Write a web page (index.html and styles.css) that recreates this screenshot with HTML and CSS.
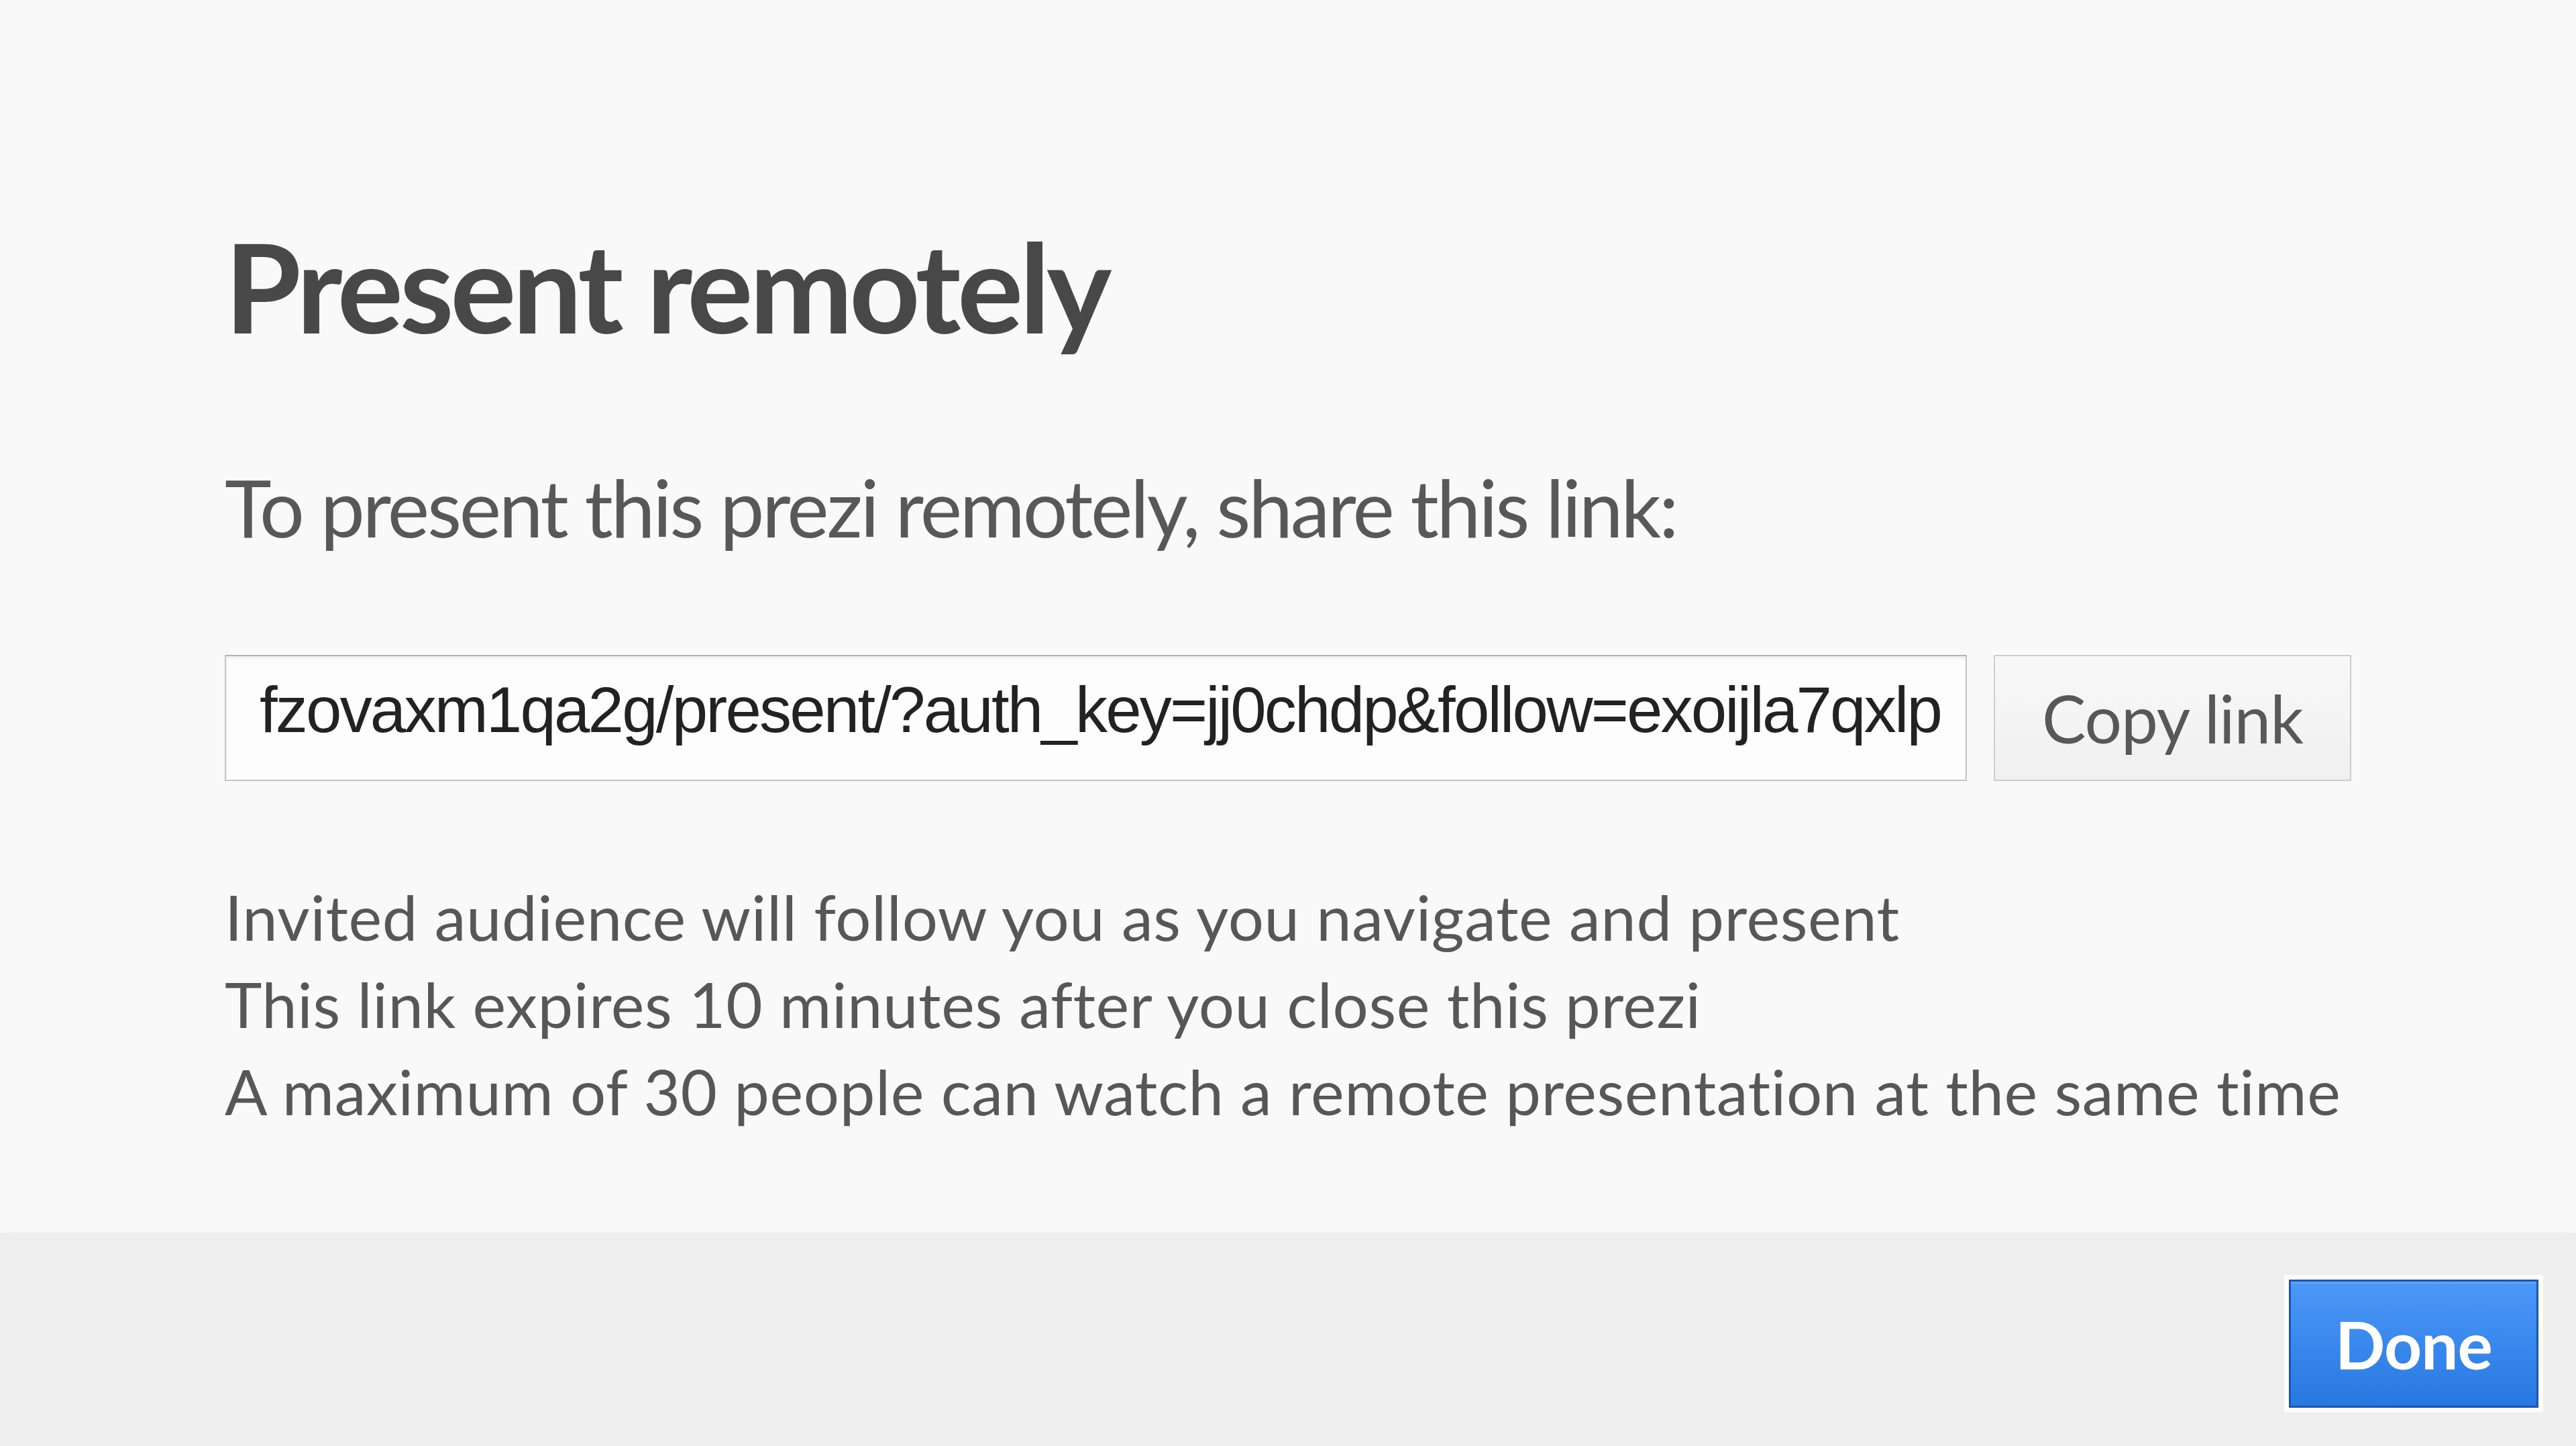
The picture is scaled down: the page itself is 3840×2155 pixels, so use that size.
FILE: index.html
```html
<!DOCTYPE html>
<html lang="en">
<head>
<meta charset="utf-8">
<title>Present remotely</title>
<link rel="stylesheet" href="styles.css">
</head>
<body>
<div class="dialog">
  <div class="content">
    <h1 class="title">Present remotely</h1>
    <p class="lead">To present this prezi remotely, share this link:</p>
    <div class="link-row">
      <div class="link-input"><span class="link-text">fzovaxm1qa2g/present/?auth_key=jj0chdp&amp;follow=exoijla7qxlp</span></div>
      <button class="copy-btn">Copy link</button>
    </div>
    <ul class="notes">
      <li>Invited audience will follow you as you navigate and present</li>
      <li>This link expires 10 minutes after you close this prezi</li>
      <li>A maximum of 30 people can watch a remote presentation at the same time</li>
    </ul>
  </div>
  <div class="footer">
    <button class="done-btn">Done</button>
  </div>
</div>
</body>
</html>
```
FILE: styles.css
```css
html, body {
  margin: 0;
  padding: 0;
  height: 100%;
}
body {
  background: #f8f8f8;
  font-family: "Lato", "Open Sans", sans-serif;
  overflow: hidden;
}
.dialog {
  display: flex;
  flex-direction: column;
  height: 2155px;
}
.content {
  height: 1837px;
  box-sizing: border-box;
  padding: 334px 0 0 335px;
  background: #f9f9f9;
}
.title {
  margin: 0;
  font-size: 184px;
  line-height: 184px;
  font-weight: 700;
  color: #484848;
  letter-spacing: -0.029em;
}
.lead {
  margin: 179px 0 0 0;
  font-size: 118px;
  line-height: 118px;
  color: #585858;
  letter-spacing: -0.0275em;
}
.link-row {
  display: flex;
  gap: 40px;
  margin-top: 161px;
  height: 188px;
}
.link-input {
  width: 2597px;
  box-sizing: border-box;
  border: 2px solid #c4c4c4;
  border-top-color: #b4b4b4;
  background: #fdfdfd;
  box-shadow: inset 0 3px 3px rgba(0,0,0,0.06);
  padding: 32px 0 0 50px;
  overflow: hidden;
  white-space: nowrap;
}
.link-text {
  font-family: "Liberation Sans", Arial, sans-serif;
  font-size: 96px;
  line-height: 96px;
  letter-spacing: -2.8px;
  color: #222;
}
.copy-btn {
  width: 533px;
  box-sizing: border-box;
  border: 2px solid #cdcdcd;
  background: linear-gradient(#f8f8f8, #f0f0f0);
  font-family: "Lato", "Open Sans", sans-serif;
  font-size: 98px;
  line-height: 98px;
  color: #585858;
  letter-spacing: -0.01em;
  padding: 0;
  display: flex;
  align-items: center;
  justify-content: center;
}
.notes {
  list-style: none;
  margin: 137px 0 0 0;
  padding: 0;
  font-size: 94px;
  line-height: 130px;
  color: #575757;
  letter-spacing: 0.6px;
}
.footer {
  flex: 1;
  background: #eeeeee;
  box-shadow: 0 -6px 10px -4px rgba(0,0,0,0.02);
  display: flex;
  justify-content: flex-end;
  align-items: flex-start;
  padding: 70px 56px 0 0;
}
.done-btn {
  width: 372px;
  height: 191px;
  box-sizing: border-box;
  border: 3px solid #1d56ad;
  background: linear-gradient(#4b98f8, #2878e1);
  box-shadow: 0 0 0 7px #fbfbf8, inset 0 3px 0 rgba(255,255,255,0.12);
  color: #fff;
  font-family: "Lato", "Open Sans", sans-serif;
  font-weight: 700;
  font-size: 98px;
  line-height: 98px;
  letter-spacing: -0.01em;
  padding: 0;
  display: flex;
  align-items: center;
  justify-content: center;
}
```
